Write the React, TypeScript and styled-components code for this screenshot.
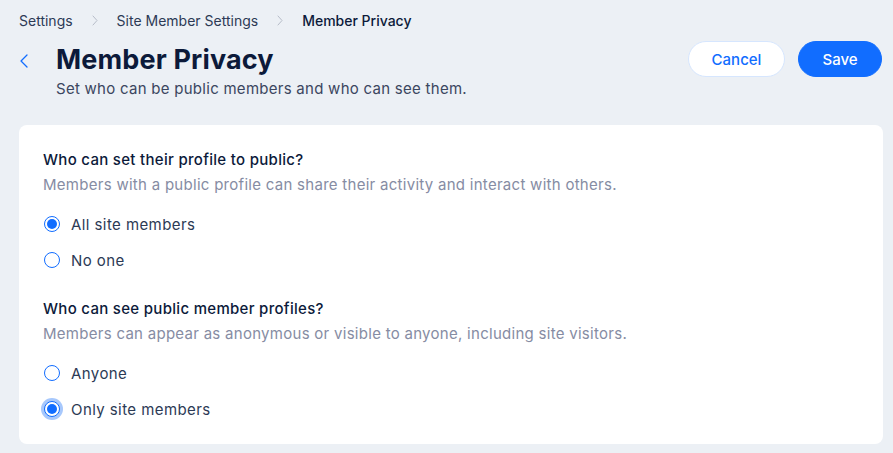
import styled, { createGlobalStyle } from "styled-components";

const GlobalStyle = createGlobalStyle`
  html, body {
    margin: 0;
    padding: 0;
    background: #ecf0f5;
    font-family: "Inter", "Noto Sans", sans-serif;
    color: #162d3d;
  }
  * { box-sizing: border-box; }
`;

const Page = styled.div`
  width: 893px;
  height: 453px;
  overflow: hidden;
  padding: 11px 10px 0 19px;
  display: flex;
  flex-direction: column;
`;

const Breadcrumbs = styled.nav`
  display: flex;
  align-items: center;
  height: 18px;
  font-size: 14px;
`;

const Crumb = styled.span<{ $current?: boolean }>`
  color: ${(p) => (p.$current ? "#0c1a3a" : "#2c3a55")};
  font-weight: ${(p) => (p.$current ? 500 : 400)};
`;

const Sep = styled.span`
  display: inline-flex;
  width: 44px;
  justify-content: center;
  color: #b6bcc8;
`;

const Header = styled.div`
  display: flex;
  align-items: flex-start;
  justify-content: space-between;
  margin-top: 12px;
`;

const TitleBlock = styled.div`
  display: flex;
  align-items: flex-start;
  margin-top: 2px;
`;

const Back = styled.button`
  border: none;
  background: none;
  padding: 0;
  width: 37px;
  height: 34px;
  display: flex;
  align-items: center;
  color: #116dff;
  cursor: pointer;
`;

const Titles = styled.div`
  display: flex;
  flex-direction: column;
`;

const Title = styled.h1`
  margin: 0;
  font-size: 27px;
  line-height: 34px;
  font-weight: 700;
  color: #0c1a3a;
  letter-spacing: 0.15px;
`;

const Subtitle = styled.p`
  margin: 2px 0 0;
  font-size: 15px;
  line-height: 20px;
  color: #3b4660;
  letter-spacing: 0.27px;
`;

const Actions = styled.div`
  display: flex;
  gap: 13px;
  margin-right: 1px;
`;

const Button = styled.button<{ $primary?: boolean }>`
  height: 36px;
  width: ${(p) => (p.$primary ? 84 : 97)}px;
  padding: 0;
  border-radius: 18px;
  font-family: inherit;
  font-size: 15px;
  font-weight: 500;
  cursor: pointer;
  border: 1px solid ${(p) => (p.$primary ? "#116dff" : "#d6e6fe")};
  background: ${(p) => (p.$primary ? "#116dff" : "#ffffff")};
  color: ${(p) => (p.$primary ? "#ffffff" : "#116dff")};
`;

const Card = styled.section`
  margin-top: 26px;
  background: #ffffff;
  border-radius: 8px;
  padding: 25px 24px 0;
  display: flex;
  flex-direction: column;
  height: 319px;
`;

const Group = styled.div`
  display: flex;
  flex-direction: column;
  & + & {
    margin-top: 21px;
  }
`;

const Question = styled.h3`
  margin: 0;
  font-size: 15px;
  line-height: 20px;
  font-weight: 500;
  color: #0c1a3a;
  letter-spacing: 0.3px;
`;

const Hint = styled.p`
  margin: 5px 0 11px;
  font-size: 15px;
  line-height: 20px;
  color: #868ca3;
  letter-spacing: 0.28px;
`;

const Option = styled.label`
  display: flex;
  align-items: center;
  gap: 11px;
  height: 36px;
  font-size: 15px;
  letter-spacing: 0.42px;
  color: #2c3a55;
  cursor: pointer;
`;

const Radio = styled.span<{ $checked?: boolean; $focused?: boolean }>`
  width: 16px;
  height: 16px;
  margin-left: 1px;
  border-radius: 50%;
  border: 1px solid #116dff;
  background: #fff;
  display: inline-flex;
  align-items: center;
  justify-content: center;
  box-shadow: ${(p) => (p.$focused ? "0 0 0 3px #a7c8fc" : "none")};
  &::after {
    content: "";
    display: ${(p) => (p.$checked ? "block" : "none")};
    width: 10px;
    height: 10px;
    border-radius: 50%;
    background: #116dff;
  }
`;

const Chevron = () => (
  <svg width="10" height="16" viewBox="0 0 10 16" fill="none" style={{ marginTop: 2 }}>
    <path d="M8 2L2 8l6 6" stroke="currentColor" strokeWidth="1.3" strokeLinecap="round" strokeLinejoin="round" />
  </svg>
);

const SepIcon = () => (
  <svg width="6" height="11" viewBox="0 0 6 11" fill="none">
    <path d="M1 1l4 4.5L1 10" stroke="currentColor" strokeWidth="1" strokeLinecap="round" strokeLinejoin="round" />
  </svg>
);

type Opt = { label: string; checked?: boolean; focused?: boolean };

const groups: { question: string; hint: string; options: Opt[] }[] = [
  {
    question: "Who can set their profile to public?",
    hint: "Members with a public profile can share their activity and interact with others.",
    options: [{ label: "All site members", checked: true }, { label: "No one" }],
  },
  {
    question: "Who can see public member profiles?",
    hint: "Members can appear as anonymous or visible to anyone, including site visitors.",
    options: [{ label: "Anyone" }, { label: "Only site members", checked: true, focused: true }],
  },
];

export default function App() {
  return (
    <>
      <GlobalStyle />
      <Page>
        <Breadcrumbs>
          <Crumb>Settings</Crumb>
          <Sep><SepIcon /></Sep>
          <Crumb>Site Member Settings</Crumb>
          <Sep><SepIcon /></Sep>
          <Crumb $current>Member Privacy</Crumb>
        </Breadcrumbs>
        <Header>
          <TitleBlock>
            <Back aria-label="Back"><Chevron /></Back>
            <Titles>
              <Title>Member Privacy</Title>
              <Subtitle>Set who can be public members and who can see them.</Subtitle>
            </Titles>
          </TitleBlock>
          <Actions>
            <Button>Cancel</Button>
            <Button $primary>Save</Button>
          </Actions>
        </Header>
        <Card>
          {groups.map((g) => (
            <Group key={g.question}>
              <Question>{g.question}</Question>
              <Hint>{g.hint}</Hint>
              {g.options.map((o) => (
                <Option key={o.label}>
                  <Radio $checked={o.checked} $focused={o.focused} />
                  {o.label}
                </Option>
              ))}
            </Group>
          ))}
        </Card>
      </Page>
    </>
  );
}
